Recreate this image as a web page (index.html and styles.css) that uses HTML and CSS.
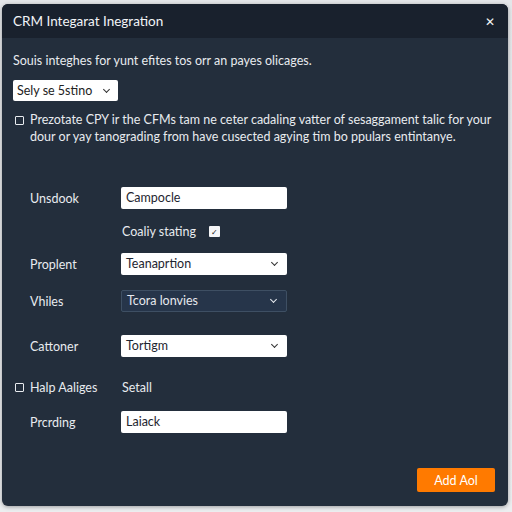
FILE: index.html
```html
<!DOCTYPE html>
<html lang="en">
<head>
    <meta charset="UTF-8">
    <meta name="viewport" content="width=device-width, initial-scale=1.0">
    <title>CRM Integarat Inegration</title>
    <link rel="stylesheet" href="styles.css">
</head>
<body>

    <div class="modal">
        <div class="modal-header">
            <h1>CRM Integarat Inegration</h1>
            <span class="close">&#x2715;</span>
        </div>

        <div class="modal-body">
            <p class="intro">Souis integhes for yunt efites tos orr an payes olicages.</p>

            <div class="select select-small">
                <span>Sely se 5stino</span>
                <span class="chevron"></span>
            </div>

            <div class="check-line">
                <span class="box"></span>
                <p>Prezotate CPY ir the CFMs tam ne ceter cadaling vatter of sesaggament talic for your dour or yay tanograding from have cusected agying tim bo ppulars entintanye.</p>
            </div>

            <div class="form">
                <div class="row">
                    <label>Unsdook</label>
                    <div class="field">Campocle</div>
                </div>
                <div class="row row-text">
                    <label></label>
                    <div class="inline">Coaliy stating <span class="tick">&#x2713;</span></div>
                </div>
                <div class="row">
                    <label>Proplent</label>
                    <div class="field select">
                        <span>Teanaprtion</span>
                        <span class="chevron"></span>
                    </div>
                </div>
                <div class="row">
                    <label>Vhiles</label>
                    <div class="field select dark">
                        <span>Tcora lonvies</span>
                        <span class="chevron"></span>
                    </div>
                </div>
                <div class="row row-far">
                    <label>Cattoner</label>
                    <div class="field select">
                        <span>Tortigm</span>
                        <span class="chevron"></span>
                    </div>
                </div>
                <div class="row row-text row-farther">
                    <label class="with-box"><span class="box"></span>Halp Aaliges</label>
                    <div class="inline">Setall</div>
                </div>
                <div class="row row-last">
                    <label>Prcrding</label>
                    <div class="field">Laiack</div>
                </div>
            </div>

            <div class="actions">
                <button class="button">Add Aol</button>
            </div>
        </div>
    </div>

</body>
</html>
```

FILE: styles.css
```css
body {
    font-family: Lato, "Noto Sans", sans-serif;
    background: linear-gradient(#e4e6e9, #eceef0);
    margin: 0;
    padding: 4px 4px 6px 2px;
    height: 512px;
    box-sizing: border-box;
}
.modal {
    height: 502px;
    background: #232e3c;
    border-radius: 6px;
    overflow: hidden;
    box-shadow: 0 1px 4px rgba(0, 0, 0, 0.35);
    display: flex;
    flex-direction: column;
}
.modal-header {
    height: 34px;
    background: #19212d;
    display: flex;
    align-items: center;
    justify-content: space-between;
    padding: 0 13px 0 11px;
}
.modal-header h1 {
    margin: 0;
    font-size: 13.5px;
    font-weight: normal;
    color: #f2f4f7;
}
.close {
    color: #f2f4f7;
    font-size: 12px;
}
.modal-body {
    flex: 1;
    display: flex;
    flex-direction: column;
    padding: 0 13px 14px 11px;
    color: #e8ebef;
    font-size: 12.5px;
}
.intro {
    margin: 15px 0 12px;
}
.select {
    display: flex;
    align-items: center;
    justify-content: space-between;
}
.select-small {
    width: 105px;
    height: 21px;
    box-sizing: border-box;
    padding: 0 9px 0 4px;
    background: #fff;
    color: #222;
    border-radius: 2px;
}
.chevron {
    width: 4px;
    height: 4px;
    border-right: 1.5px solid #333;
    border-bottom: 1.5px solid #333;
    transform: rotate(45deg);
    margin-top: -3px;
}
.check-line {
    display: flex;
    align-items: flex-start;
    margin-top: 10px;
    padding-left: 2px;
}
.check-line p {
    margin: 0;
    line-height: 17px;
}
.box {
    flex: none;
    width: 7px;
    height: 7px;
    border: 1.5px solid #e8ebef;
    border-radius: 1px;
    margin: 5px 6px 0 0;
}
.form {
    display: flex;
    flex-direction: column;
    gap: 15px;
    margin-top: 42px;
}
.row {
    display: grid;
    grid-template-columns: 108px 166px;
    align-items: center;
}
.row label {
    padding-left: 17px;
}
.row .with-box {
    display: flex;
    align-items: center;
    padding-left: 2px;
}
.row .with-box .box {
    margin: 0 6px 0 0;
}
.row-text {
    height: 14px;
}
.row-far {
    margin-top: 8px;
}
.row-farther {
    margin-top: 8px;
}
.row-last {
    margin-top: 2px;
}
.field {
    height: 22px;
    box-sizing: border-box;
    background: #fff;
    color: #1e2530;
    border-radius: 2px;
    padding: 0 10px 0 5px;
    line-height: 22px;
}
.field.dark {
    background: #26354a;
    border: 1px solid #3e4f63;
    color: #e6e9ee;
}
.field.dark .chevron {
    border-color: #e6e9ee;
}
.inline {
    padding-left: 1px;
    display: flex;
    align-items: center;
}
.tick {
    display: inline-flex;
    align-items: center;
    justify-content: center;
    width: 11px;
    height: 11px;
    background: #f4f5f7;
    color: #222;
    font-size: 8px;
    border-radius: 1px;
    margin-left: 13px;
}
.actions {
    margin-top: auto;
    display: flex;
    justify-content: flex-end;
}
.button {
    background-color: #ff7a00;
    color: #fff;
    border: none;
    border-radius: 2px;
    width: 78px;
    height: 24px;
    font-family: inherit;
    font-size: 12.5px;
}
```
